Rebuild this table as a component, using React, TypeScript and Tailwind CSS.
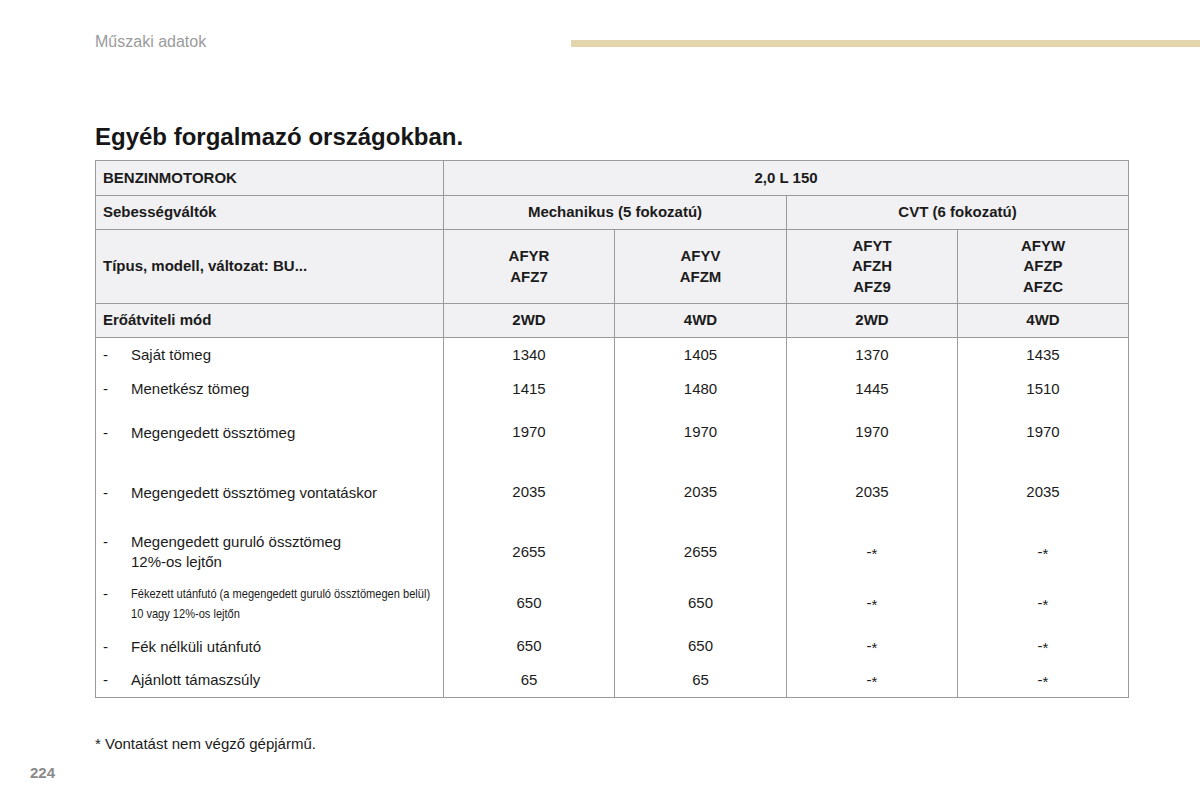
const sans = "font-['Liberation_Sans',Arial,sans-serif]";

type Row = { label: string[]; small?: boolean; h: string; values: string[] };

const rows: Row[] = [
  { label: ["Saját tömeg"], h: "h-[34px]", values: ["1340", "1405", "1370", "1435"] },
  { label: ["Menetkész tömeg"], h: "h-[35px]", values: ["1415", "1480", "1445", "1510"] },
  { label: ["Megengedett össztömeg"], h: "h-[52px]", values: ["1970", "1970", "1970", "1970"] },
  { label: ["Megengedett össztömeg vontatáskor"], h: "h-[68px]", values: ["2035", "2035", "2035", "2035"] },
  {
    label: ["Megengedett guruló össztömeg", "12%-os lejtőn"],
    h: "h-[51px]",
    values: ["2655", "2655", "-*", "-*"],
  },
  {
    label: ["Fékezett utánfutó (a megengedett guruló össztömegen belül)", "10 vagy 12%-os lejtőn"],
    small: true,
    h: "h-[52px]",
    values: ["650", "650", "-*", "-*"],
  },
  { label: ["Fék nélküli utánfutó"], h: "h-[34px]", values: ["650", "650", "-*", "-*"] },
  { label: ["Ajánlott támaszsúly"], h: "h-[34px]", values: ["65", "65", "-*", "-*"] },
];

function Value({ v }: { v: string }) {
  if (v === "-*") {
    return (
      <span>
        -<sup className="text-[15px] relative top-[2px]">*</sup>
      </span>
    );
  }
  return <span>{v}</span>;
}

export default function App() {
  const head = "border border-[#9a9a9a] bg-[#f1f1f3]";
  const cell = "border-x border-[#9a9a9a] text-center align-middle";
  return (
    <div className={`w-[1200px] h-[800px] bg-white text-[#1b1b1b] ${sans} flex flex-col`}>
      {/* page header */}
      <div className="flex items-start pt-[33px]">
        <span className="ml-[95px] text-[16px] leading-[18px] text-[#9b9b9b]">Műszaki adatok</span>
        <div className="ml-auto mt-[7px] w-[629px] h-[7px] bg-[#e3d5ad]" />
      </div>

      <h1 className="ml-[95px] mt-[72px] text-[24px] leading-[28px] font-bold text-[#161616]">
        Egyéb forgalmazó országokban.
      </h1>

      <table className="ml-[95px] mt-[9px] w-[1034px] table-fixed border-collapse border border-[#9a9a9a]">
        <colgroup>
          <col className="w-[348px]" />
          <col className="w-[171px]" />
          <col className="w-[172px]" />
          <col className="w-[171px]" />
          <col className="w-[171px]" />
        </colgroup>
        <tbody>
          <tr className="h-[35px]">
            <td className={`${head} pl-[7px] text-[15px] font-bold`}>BENZINMOTOROK</td>
            <td colSpan={4} className={`${head} text-center text-[15px] font-bold`}>
              2,0 L 150
            </td>
          </tr>
          <tr className="h-[34px]">
            <td className={`${head} pl-[7px] text-[15px] font-bold`}>Sebességváltók</td>
            <td colSpan={2} className={`${head} text-center text-[15px] font-bold`}>
              Mechanikus (5 fokozatú)
            </td>
            <td colSpan={2} className={`${head} text-center text-[15px] font-bold`}>
              CVT (6 fokozatú)
            </td>
          </tr>
          <tr className="h-[74px]">
            <td className={`${head} pl-[7px] text-[15px] font-bold`}>Típus, modell, változat: BU...</td>
            {[
              ["AFYR", "AFZ7"],
              ["AFYV", "AFZM"],
              ["AFYT", "AFZH", "AFZ9"],
              ["AFYW", "AFZP", "AFZC"],
            ].map((codes, i) => (
              <td key={i} className={`${head} text-center text-[15px] leading-[20.5px] font-bold`}>
                {codes.map((c) => (
                  <div key={c}>{c}</div>
                ))}
              </td>
            ))}
          </tr>
          <tr className="h-[34px]">
            <td className={`${head} pl-[7px] text-[15px] font-bold`}>Erőátviteli mód</td>
            {["2WD", "4WD", "2WD", "4WD"].map((d, i) => (
              <td key={i} className={`${head} text-center text-[15px] font-bold`}>
                {d}
              </td>
            ))}
          </tr>

          {rows.map((r, i) => (
            <tr key={i} className={r.h}>
              <td className="border-x border-[#9a9a9a] align-middle">
                <div className="flex">
                  <span className="w-[35px] shrink-0 pl-[7px] text-[15px] leading-[20px]">-</span>
                  <div
                    className={
                      r.small
                        ? "origin-left scale-x-[0.82] whitespace-nowrap text-[13.5px] leading-[20px]"
                        : "whitespace-nowrap text-[15px] leading-[20px]"
                    }
                  >
                    {r.label.map((l) => (
                      <div key={l}>{l}</div>
                    ))}
                  </div>
                </div>
              </td>
              {r.values.map((v, j) => (
                <td key={j} className={`${cell} text-[15px]`}>
                  <Value v={v} />
                </td>
              ))}
            </tr>
          ))}
        </tbody>
      </table>

      <p className="ml-[95px] mt-[37px] text-[15px] leading-[18px]">* Vontatást nem végző gépjármű.</p>
      <p className="ml-[30px] mt-[11px] text-[15px] leading-[18px] font-bold text-[#8a8a8a]">224</p>
    </div>
  );
}
